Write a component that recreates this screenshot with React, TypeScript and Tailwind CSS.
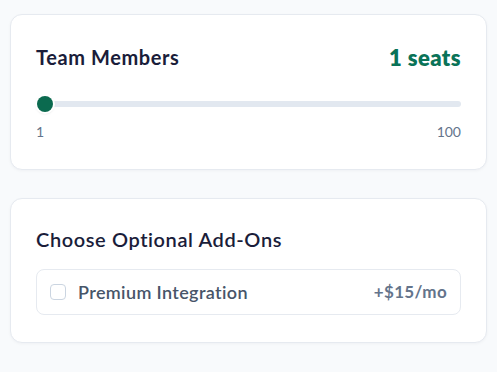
import { useState } from "react";

export default function App() {
  const [seats] = useState(1);
  const [checked, setChecked] = useState(false);

  return (
    <div
      className="min-h-[372px] w-full bg-[#f8fafc] px-[10px] pt-[14px]"
      style={{ fontFamily: "Lato, 'Open Sans', sans-serif" }}
    >
      {/* Team Members */}
      <div className="rounded-xl border border-[#e6eaf0] bg-white px-[25px] pt-[28px] pb-[27px] shadow-[0_1px_3px_rgba(15,23,42,0.04)]">
        <div className="flex h-7 items-center justify-between">
          <h3 className="text-[20px] font-bold tracking-[0.03em] text-[#1a1d3a]">Team Members</h3>
          <span className="text-[22px] font-extrabold tracking-[0.02em] text-[#0a7358]">{seats} seats</span>
        </div>
        <div className="relative mt-6 flex h-[18px] items-center">
          <div className="h-1.5 w-full rounded-full bg-[#e2e8f0]" />
          <div className="absolute left-[1px] top-[1px] h-4 w-4 rounded-full bg-[#0b6a4f] shadow-[0_0_0_2px_#fff,0_1px_3px_rgba(0,0,0,0.25)]" />
        </div>
        <div className="mt-[9px] flex justify-between text-[14px] leading-5 text-[#64748b]">
          <span>1</span>
          <span>100</span>
        </div>
      </div>

      {/* Add-ons */}
      <div className="mt-[28px] rounded-xl border border-[#e6eaf0] bg-white px-[25px] pt-[26px] pb-[27px] shadow-[0_1px_3px_rgba(15,23,42,0.04)]">
        <h3 className="h-7 text-[20px] font-semibold leading-7 tracking-[0.03em] text-[#1a1d3a]">Choose Optional Add-Ons</h3>
        <label className="mt-4 flex h-[46px] cursor-pointer items-center justify-between rounded-lg border border-[#e6eaf0] px-[13px]">
          <span className="flex items-center gap-3">
            <input
              type="checkbox"
              checked={checked}
              onChange={() => setChecked(!checked)}
              className="h-4 w-4 appearance-none rounded border border-[#cbd5e1] bg-white"
            />
            <span className="text-[18px] font-semibold tracking-[0.02em] text-[#475569]">Premium Integration</span>
          </span>
          <span className="text-[17px] font-bold tracking-[0.02em] text-[#64748b]">+$15/mo</span>
        </label>
      </div>
    </div>
  );
}
